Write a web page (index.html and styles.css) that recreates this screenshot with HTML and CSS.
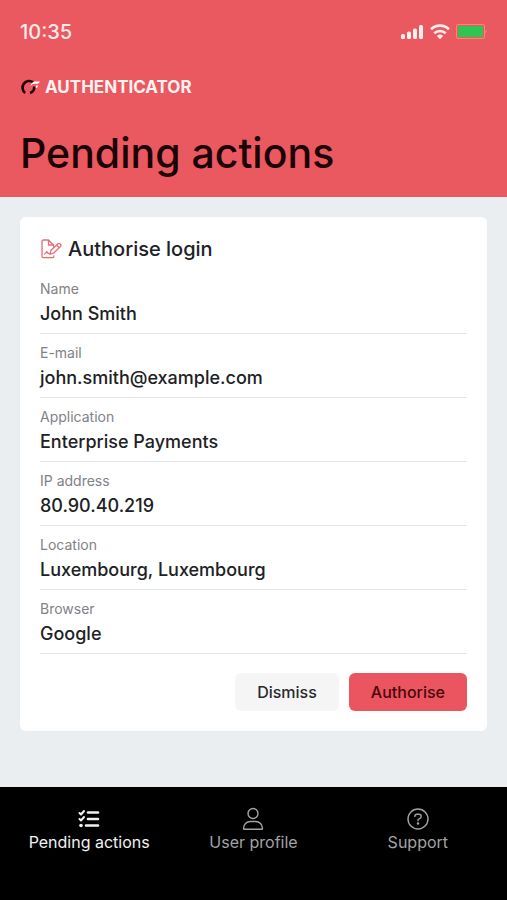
FILE: index.html
```html
<!DOCTYPE html>
<html lang="en">
<head>
<meta charset="utf-8">
<meta name="viewport" content="width=device-width, initial-scale=1">
<title>Authenticator</title>
<link rel="stylesheet" href="styles.css">
</head>
<body>
<header class="header">
  <div class="status">
    <span class="time">10:35</span>
    <div class="indicators">
      <svg width="24" height="16" viewBox="0 0 24 16" fill="#fff0ef" aria-hidden="true">
        <rect x="0" y="10" width="4" height="5" rx="1.500"/><rect x="6" y="7.500" width="4" height="7.500" rx="1.500"/><rect x="12" y="4.500" width="4" height="10.500" rx="1.500"/><rect x="18" y="1" width="4" height="14" rx="1.500"/>
      </svg>
      <svg width="20" height="16" viewBox="0 0 20 16" fill="none" stroke="#fff0ef" stroke-width="2.6" aria-hidden="true">
        <path d="M1 5.2a13 13 0 0 1 18 0M4.3 9.200a8.3 8.3 0 0 1 11.400 0"/><path d="M6.900 12a4.500 4.500 0 0 1 6.200 0L10 15.200z" fill="#fff0ef" stroke="none"/>
      </svg>
      <svg width="32" height="16" viewBox="0 0 32 16" aria-hidden="true">
        <rect x="1.500" y=".5" width="28" height="14" rx="1.500" fill="none" stroke="#f28a72"/><rect x="3" y="2" width="25" height="11" rx="1" fill="#30c552"/><path d="M30.500 5.500q2 2 0 4z" fill="#f28a72"/>
      </svg>
    </div>
  </div>
  <div class="brand">
    <svg width="21" height="18" viewBox="0 0 21 18" fill="none" aria-hidden="true">
      <path d="M5.200 15A6.500 6.500 0 1 1 13.200 4.300M14.300 8.500A6.500 6.500 0 0 1 10 15" stroke="#210407" stroke-width="2.600"/>
      <path d="M20 3.500H15.500Q11.500 3.700 10.500 8Q12.300 5.900 14.500 5.800H17.500Q19.300 5.600 20 3.500zM18.300 7.500H15.800V10H16.300Q17.800 9.700 18.300 7.500z" fill="#fff"/>
    </svg>
    <span class="brand-name">AUTHENTICATOR</span>
  </div>
  <h1 class="title">Pending actions</h1>
</header>
<main class="content">
  <section class="card">
    <h2 class="card-title">
      <svg width="22" height="20" viewBox="0 0 22 20" fill="none" stroke="#e66b75" stroke-width="1.300" stroke-linecap="round" stroke-linejoin="round" aria-hidden="true">
        <path d="M14 17Q14 18.700 12.300 18.700H3.500Q2 18.700 2 17.200V2.500Q2 1 3.500 1H8.500L13.500 6V7.500M8.500 1V6H13.500"/>
        <path d="M11 11.300L18 4.700Q19 3.900 20.200 5Q21.600 6.200 20.600 7.400L13.500 14.200L10 15.200zM16.500 6.100L19.200 8.800M4.500 15Q6 14.500 6.800 12.500Q7.500 14.500 10 15.200"/>
      </svg>
      Authorise login
    </h2>
    <dl class="details">
      <div class="row"><dt>Name</dt><dd>John Smith</dd></div>
      <div class="row"><dt>E-mail</dt><dd>john.smith@example.com</dd></div>
      <div class="row"><dt>Application</dt><dd>Enterprise Payments</dd></div>
      <div class="row"><dt>IP address</dt><dd>80.90.40.219</dd></div>
      <div class="row"><dt>Location</dt><dd>Luxembourg, Luxembourg</dd></div>
      <div class="row"><dt>Browser</dt><dd>Google</dd></div>
    </dl>
    <div class="actions">
      <button class="button" type="button">Dismiss</button>
      <button class="button button-primary" type="button">Authorise</button>
    </div>
  </section>
</main>
<nav class="tabs">
  <a class="tab tab-active" href="#pending" aria-current="page">
    <svg width="24" height="24" viewBox="0 0 24 24" fill="none" stroke="currentColor" stroke-width="2" stroke-linecap="round" stroke-linejoin="round" aria-hidden="true">
      <path d="M11 5.500H21M11 12H21M9 18.500H21" stroke-width="2.600"/><path d="M2.500 6L4 7.500L7 4M2.500 12L4 13.500L7 10"/><circle cx="4" cy="18.500" r="1.800" fill="currentColor" stroke="none"/>
    </svg>
    Pending actions
  </a>
  <a class="tab" href="#profile">
    <svg width="24" height="24" viewBox="0 0 24 24" fill="none" stroke="currentColor" stroke-width="1.400" stroke-linejoin="round" aria-hidden="true">
      <circle cx="12" cy="6.500" r="5"/><path d="M2.500 21.500C2.500 17.500 5.500 14.500 9.500 14.500H14.500C18.500 14.500 21.500 17.500 21.500 21.500Q21.500 22.300 20.700 22.300H3.300Q2.500 22.300 2.500 21.500z"/>
    </svg>
    User profile
  </a>
  <a class="tab" href="#support">
    <svg width="24" height="24" viewBox="0 0 24 24" fill="none" stroke="currentColor" stroke-width="1.400" stroke-linecap="round" stroke-linejoin="round" aria-hidden="true">
      <circle cx="12" cy="12" r="10"/><path d="M8.800 9.500Q8.800 7.300 11 7.300H13Q15.200 7.300 15.200 9.300Q15.200 10.600 14 11.300L12 12.500V13.800"/><circle cx="12" cy="16.500" r=".6" fill="currentColor"/>
    </svg>
    Support
  </a>
</nav>
</body>
</html>
```
FILE: styles.css
```css
* {
  box-sizing: border-box;
  margin: 0;
}

body {
  display: flex;
  flex-direction: column;
  min-height: 100vh;
  background: #eaeef1;
  color: #202124;
  font-family: Inter, "Liberation Sans", sans-serif;
}

.header {
  padding: 20px 20px 18px;
  background: #ea5860;
}

.status,
.indicators,
.brand,
.card-title {
  display: flex;
  align-items: center;
}

.status {
  justify-content: space-between;
  height: 24px;
}

.time {
  color: #ffeaea;
  font-size: 20px;
  font-weight: 500;
}

.indicators {
  gap: 5px;
}

.brand {
  gap: 4px;
  height: 24px;
  margin-top: 31px;
}

.brand-name {
  color: #fff3f2;
  font-size: 17px;
  font-weight: 700;
  line-height: 24px;
}

.title {
  margin-top: 28px;
  color: #1b0205;
  font-size: 41px;
  font-weight: 500;
  line-height: 52px;
}

.content {
  flex: 1;
  padding: 20px;
}

.card {
  padding: 20px;
  border-radius: 6px;
  background: #fff;
}

.card-title {
  gap: 6px;
  margin-bottom: 16px;
  font-size: 20px;
  font-weight: 500;
  line-height: 24px;
}

.row {
  padding: 2px 0 5px;
  border-bottom: 1px solid #e3e4e6;
}

.row + .row {
  padding-top: 9px;
}

dt {
  color: #818286;
  font-size: 14px;
  line-height: 20px;
}

dd {
  font-size: 18px;
  font-weight: 500;
  line-height: 29px;
}

.actions {
  display: flex;
  justify-content: flex-end;
  gap: 10px;
  margin-top: 19px;
}

.button {
  height: 38px;
  padding: 0 22px;
  border: 0;
  border-radius: 6px;
  background: #f5f5f6;
  color: #29292c;
  font: 500 16px/20px Inter, sans-serif;
}

.button-primary {
  background: #ea5560;
  color: #4a070c;
}

.tabs {
  display: grid;
  grid-template-columns: repeat(3, 1fr);
  min-height: 113px;
  padding: 20px 7px;
  background: #000;
}

.tab {
  display: flex;
  flex-direction: column;
  align-items: center;
  color: #a3a3a5;
  font-size: 16px;
  line-height: 22px;
  text-decoration: none;
}

.tab-active {
  color: #f2f2f2;
}
```
